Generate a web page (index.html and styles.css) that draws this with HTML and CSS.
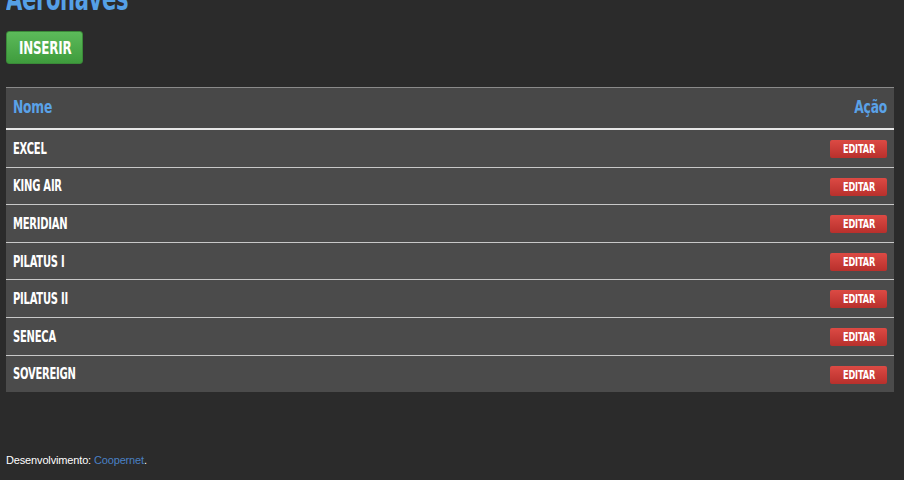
FILE: index.html
```html
<!DOCTYPE html>
<html lang="pt">
<head>
<meta charset="utf-8">
<title>Aeronaves</title>
<link rel="stylesheet" href="styles.css">
</head>
<body>
<div class="page">
  <h1 class="title"><span class="cx">Aeronaves</span></h1>
  <a class="btn-insert" href="#"><span class="cx">INSERIR</span></a>
  <table class="grid">
    <thead>
      <tr><th class="c-name"><span class="cx">Nome</span></th><th class="c-act"><span class="cx">Ação</span></th></tr>
    </thead>
    <tbody>
      <tr><td><span class="cx">EXCEL</span></td><td class="c-act"><a class="btn-edit" href="#"><span class="cx">EDITAR</span></a></td></tr>
      <tr><td><span class="cx">KING AIR</span></td><td class="c-act"><a class="btn-edit" href="#"><span class="cx">EDITAR</span></a></td></tr>
      <tr><td><span class="cx">MERIDIAN</span></td><td class="c-act"><a class="btn-edit" href="#"><span class="cx">EDITAR</span></a></td></tr>
      <tr><td><span class="cx">PILATUS I</span></td><td class="c-act"><a class="btn-edit" href="#"><span class="cx">EDITAR</span></a></td></tr>
      <tr><td><span class="cx">PILATUS II</span></td><td class="c-act"><a class="btn-edit" href="#"><span class="cx">EDITAR</span></a></td></tr>
      <tr><td><span class="cx">SENECA</span></td><td class="c-act"><a class="btn-edit" href="#"><span class="cx">EDITAR</span></a></td></tr>
      <tr><td><span class="cx">SOVEREIGN</span></td><td class="c-act"><a class="btn-edit" href="#"><span class="cx">EDITAR</span></a></td></tr>
    </tbody>
  </table>
  <footer class="foot">Desenvolvimento: <a href="#">Coopernet</a>.</footer>
</div>
</body>
</html>
```
FILE: styles.css
```css
html, body {
  margin: 0;
  padding: 0;
  background: #2b2b2b;
  height: 480px;
  overflow: hidden;
}
.page {
  padding: 0 10px 0 6px;
  font-family: "DejaVu Sans Condensed", "DejaVu Sans", sans-serif;
  font-stretch: condensed;
}
.cx {
  display: inline-block;
  transform: scaleX(0.76);
  transform-origin: left center;
}
.title {
  margin: -26px 0 0 0;
  height: 57px;
  font-size: 33px;
  line-height: 50px;
  font-weight: bold;
  color: #55a0e6;
  letter-spacing: -0.5px;
}
.title .cx { transform: scaleX(0.71); }
.btn-insert {
  display: flex;
  align-items: center;
  width: 77px;
  height: 33px;
  padding-left: 12px;
  box-sizing: border-box;
  background: linear-gradient(#5cba5a, #3f9c3d);
  border: 1px solid #3a8a38;
  border-radius: 3px;
  color: #fff;
  font-size: 17px;
  font-weight: bold;
  text-decoration: none;
  letter-spacing: -0.3px;
}
.btn-insert .cx { transform: scaleX(0.78); }
.grid {
  margin-top: 23px;
  width: 888px;
  border-collapse: collapse;
  background: #4b4b4b;
}
.grid th {
  height: 37px;
  padding: 0 7px 3px;
  background: #484848;
  border-top: 1px solid #8a8a8a;
  border-bottom: 2px solid #e6e6e6;
  color: #5aa2e8;
  font-size: 18px;
  font-weight: bold;
  letter-spacing: -0.3px;
}
.grid th.c-name { text-align: left; }
.grid th.c-act { text-align: right; }
.grid th.c-act .cx { transform-origin: right center; }
.grid td {
  height: 35.6px;
  padding: 1px 7px 0;
  border-top: 1px solid #c8c8c8;
  color: #fff;
  font-size: 15px;
  font-weight: bold;
  letter-spacing: -0.3px;
}
.grid td .cx { transform: scaleX(0.74); }
.grid tbody tr:first-child td { border-top: none; }
.grid td.c-act { text-align: right; }
.btn-edit {
  display: inline-flex;
  align-items: center;
  width: 57px;
  height: 18px;
  padding-left: 13px;
  box-sizing: border-box;
  background: linear-gradient(#dc4a44, #b8302c);
  border-radius: 2px;
  color: #fff;
  font-size: 12px;
  font-weight: bold;
  text-decoration: none;
  letter-spacing: -0.2px;
  vertical-align: middle;
}
.grid td .btn-edit .cx { transform: scaleX(0.76); }
.foot {
  margin-top: 62px;
  font-family: "Liberation Sans", Arial, sans-serif;
  font-size: 11px;
  color: #fff;
  letter-spacing: -0.15px;
}
.foot a {
  color: #4a80c4;
  text-decoration: none;
}
```
